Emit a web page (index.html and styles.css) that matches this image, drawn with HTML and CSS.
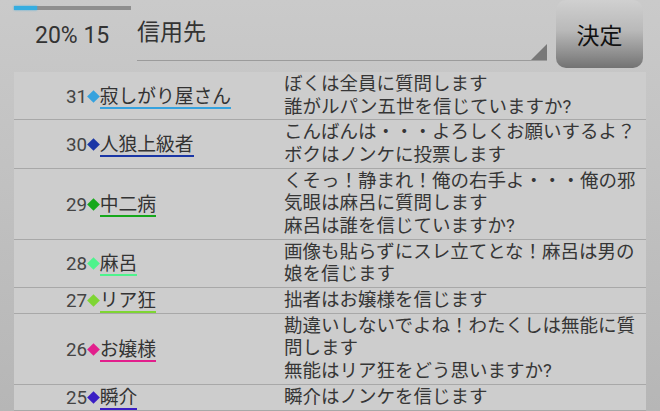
FILE: index.html
```html
<!DOCTYPE html>
<html lang="ja">
<head>
<meta charset="utf-8">
<link rel="stylesheet" href="styles.css">
</head>
<body>
<div class="screen">
  <header class="top">
    <div class="stat">
      <div class="progress"><div class="progress-fill"></div></div>
      <div class="stat-text">20% 15</div>
    </div>
    <div class="spinner">
      <span class="spinner-text">信用先</span>
      <span class="spinner-arrow"></span>
    </div>
    <button class="decide">決定</button>
  </header>
  <div class="list">
    <div class="row">
      <div class="who"><span class="num">31</span><span class="dia sky"></span><span class="name sky">寂しがり屋さん</span></div>
      <div class="msg">ぼくは全員に質問します<br>誰がルパン五世を信じていますか?</div>
    </div>
    <div class="row">
      <div class="who"><span class="num">30</span><span class="dia navy"></span><span class="name navy">人狼上級者</span></div>
      <div class="msg">こんばんは・・・よろしくお願いするよ？<br>ボクはノンケに投票します</div>
    </div>
    <div class="row">
      <div class="who"><span class="num">29</span><span class="dia green"></span><span class="name green">中二病</span></div>
      <div class="msg">くそっ！静まれ！俺の右手よ・・・俺の邪<br>気眼は麻呂に質問します<br>麻呂は誰を信じていますか?</div>
    </div>
    <div class="row">
      <div class="who"><span class="num">28</span><span class="dia mint"></span><span class="name mint">麻呂</span></div>
      <div class="msg">画像も貼らずにスレ立てとな！麻呂は男の<br>娘を信じます</div>
    </div>
    <div class="row">
      <div class="who"><span class="num">27</span><span class="dia lime"></span><span class="name lime">リア狂</span></div>
      <div class="msg">拙者はお嬢様を信じます</div>
    </div>
    <div class="row">
      <div class="who"><span class="num">26</span><span class="dia pink"></span><span class="name pink">お嬢様</span></div>
      <div class="msg">勘違いしないでよね！わたくしは無能に質<br>問します<br>無能はリア狂をどう思いますか?</div>
    </div>
    <div class="row">
      <div class="who"><span class="num">25</span><span class="dia indigo"></span><span class="name indigo">瞬介</span></div>
      <div class="msg">瞬介はノンケを信じます</div>
    </div>
  </div>
</div>
</body>
</html>
```
FILE: styles.css
```css
html, body {
  margin: 0;
  padding: 0;
}
body {
  width: 660px;
  height: 411px;
  overflow: hidden;
  background: linear-gradient(#cacaca, #b6b6b6);
  font-family: Roboto, "Noto Sans CJK JP", sans-serif;
  color: #333;
}
.screen {
  padding: 0 14px;
}
.top {
  display: flex;
  height: 72px;
  padding-right: 3px;
}
.stat {
  width: 123px;
  display: flex;
  flex-direction: column;
}
.progress {
  margin-top: 6px;
  width: 117px;
  height: 4px;
  background: #8f8f8f;
}
.progress-fill {
  width: 23px;
  height: 100%;
  background: #36ade0;
  box-shadow: 0 0 2px #36ade0;
}
.stat-text {
  margin-top: 14px;
  padding-left: 21px;
  font-size: 23px;
  line-height: 23px;
  color: #333;
}
.spinner {
  flex: 1;
  display: flex;
  height: 60px;
  border-bottom: 1.5px solid #9b9b9b;
}
.spinner-text {
  align-self: flex-start;
  margin-top: 21px;
  font-size: 23px;
  line-height: 23px;
  color: #333;
}
.spinner-arrow {
  align-self: flex-end;
  margin-left: auto;
  width: 0;
  height: 0;
  border-left: 16px solid transparent;
  border-bottom: 16px solid #787878;
}
.decide {
  margin-left: 9px;
  width: 87px;
  height: 68px;
  border: none;
  border-radius: 10px;
  background: linear-gradient(#d0d0d0 0%, #b9b9b9 45%, #8d8d8d 80%, #727272 100%);
  font-family: Roboto, "Noto Sans CJK JP", sans-serif;
  font-size: 23px;
  color: #111;
  padding: 0;
}
.list {
  background: #cdcdcd;
  font-size: 18.5px;
}
.row {
  display: grid;
  grid-template-columns: 270px 1fr;
  padding: 1px 0 1.2px;
  border-bottom: 1px solid #a8a8a8;
}
.who {
  display: flex;
  align-items: center;
  padding-left: 52px;
  padding-top: 2px;
  margin-bottom: -2px;
  font-size: 18.8px;
}
.num {
  line-height: 20px;
  padding-bottom: 2px;
  color: #444;
}
.dia {
  width: 9px;
  height: 9px;
  margin: 0 2px 3px 1.5px;
  transform: rotate(45deg);
  background: var(--c);
}
.name {
  line-height: 20px;
  border-bottom: 2px solid var(--c);
  color: #333;
}
.msg {
  line-height: 22.6px;
  color: #363636;
  white-space: nowrap;
}
.sky { --c: #36a2de; }
.navy { --c: #1a36a6; }
.green { --c: #16a81a; }
.mint { --c: #4ef38c; }
.lime { --c: #7ed533; }
.pink { --c: #e21f8c; }
.indigo { --c: #3a1ec4; }
```
